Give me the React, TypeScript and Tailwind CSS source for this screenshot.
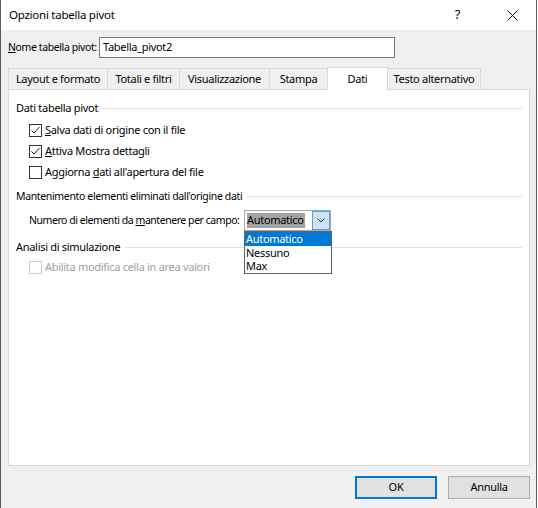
import type { ReactNode } from 'react';

const tabs = [
  { label: 'Layout e formato', width: 'w-[100px]' },
  { label: 'Totali e filtri', width: 'w-[73px]' },
  { label: 'Visualizzazione', width: 'w-[91px]' },
  { label: 'Stampa', width: 'w-[59px]' },
  { label: 'Dati', width: 'w-[61px]', active: true },
  { label: 'Testo alternativo', width: 'w-[94px]' },
];

const font = { fontFamily: '"Noto Sans", "Open Sans", sans-serif' };

export default function App() {
  return (
    <div
      className="h-[508px] w-[538px] overflow-hidden whitespace-nowrap bg-white text-[11px] tracking-[-0.3px] text-black"
      style={font}
    >
      <div className="flex h-[508px] w-[537px] flex-col border-x border-[#5c5c5c]">
        <TitleBar />
        <div className="flex flex-1 flex-col bg-[#f0f0f0] pl-[7px] pr-[6px]">
          <div className="mt-[7px] flex h-[21px] items-center">
            <span className="w-[91px] shrink-0 text-[10.5px] tracking-[-0.4px]">
              <u>N</u>ome tabella pivot:
            </span>
            <div className="flex h-[21px] w-[296px] items-center border border-[#7a7a7a] bg-white pl-[3px]">
              Tabella_pivot2
            </div>
          </div>

          <div className="mt-[9px] flex h-[22px] items-end">
            {tabs.map((tab) =>
              tab.active ? (
                <div
                  key={tab.label}
                  className={`relative z-10 -mb-px -mr-px flex h-[23px] ${tab.width} shrink-0 items-center justify-center border border-b-0 border-[#d9d9d9] bg-white`}
                >
                  {tab.label}
                </div>
              ) : (
                <div
                  key={tab.label}
                  className={`-mr-px flex h-[21px] ${tab.width} shrink-0 items-center justify-center border border-b-0 border-[#d9d9d9] bg-[#f0f0f0]`}
                >
                  {tab.label}
                </div>
              ),
            )}
          </div>

          <div className="relative flex h-[377px] w-[522px] flex-col border border-[#d9d9d9] bg-white pl-[7px] pr-[7px] pt-[8px]">
            <GroupHeader>Dati tabella pivot</GroupHeader>
            <div className="mt-[2px] flex flex-col">
              <CheckRow checked>
                <u>S</u>alva dati di origine con il file
              </CheckRow>
              <CheckRow checked>
                <u>A</u>ttiva Mostra dettagli
              </CheckRow>
              <CheckRow>
                Aggiorna <u>d</u>ati all'apertura del file
              </CheckRow>
            </div>

            <div className="mt-[3px]">
              <GroupHeader>
                <span className="text-[10.5px] tracking-[-0.35px]">Mantenimento elementi eliminati dall'origine dati</span>
              </GroupHeader>
            </div>
            <div className="mt-[4px] flex h-[21px] items-center pl-[13px]">
              <span className="w-[215px] shrink-0 text-[10.5px] tracking-[-0.45px]">
                Numero di elementi da <u>m</u>antenere per campo:
              </span>
              <ComboBox />
            </div>

            <div className="mt-[6px]">
              <GroupHeader>Analisi di simulazione</GroupHeader>
            </div>
            <CheckRow disabled>Abilita modifica cella in area valori</CheckRow>
          </div>

          <div className="mt-[10px] flex justify-end gap-[11px]">
            <button className="h-[23px] w-[82px] border border-[#0078d7] bg-[#e1e1e1] shadow-[inset_0_0_0_1px_#0078d7]">
              OK
            </button>
            <button className="h-[23px] w-[82px] border border-[#adadad] bg-[#e1e1e1]">Annulla</button>
          </div>
        </div>
      </div>
    </div>
  );
}

function TitleBar() {
  return (
    <div className="flex h-[30px] shrink-0 items-center bg-white">
      <span className="pl-[8px] text-[11.5px] tracking-[-0.25px]">Opzioni tabella pivot</span>
      <span className="ml-auto mr-[47px] text-[13px]">?</span>
      <svg className="mr-[18px]" width="11" height="11" viewBox="0 0 11 11" aria-label="Chiudi">
        <path d="M0.5 0.5L10.5 10.5M10.5 0.5L0.5 10.5" stroke="#111" strokeWidth="1" />
      </svg>
    </div>
  );
}

function GroupHeader({ children }: { children: ReactNode }) {
  return (
    <div className="flex h-[20px] items-center gap-[5px]">
      <span className="shrink-0">{children}</span>
      <div className="h-px flex-1 bg-[#e3e3e3]" />
    </div>
  );
}

function CheckRow({ checked, disabled, children }: { checked?: boolean; disabled?: boolean; children: ReactNode }) {
  return (
    <div className={`flex h-[21px] items-center pl-[13px] ${disabled ? 'text-[#a0a0a0]' : ''}`}>
      <div
        className={`mr-[3px] flex h-[13px] w-[13px] shrink-0 items-center justify-center border bg-white ${
          disabled ? 'border-[#cccccc]' : 'border-[#333333]'
        }`}
      >
        {checked && (
          <svg width="11" height="11" viewBox="0 0 11 11">
            <path d="M1.5 5.5L4 8L9.5 2" fill="none" stroke="#222" strokeWidth="1" />
          </svg>
        )}
      </div>
      <span>{children}</span>
    </div>
  );
}

function ComboBox() {
  return (
    <div className="relative flex h-[21px] w-[87px] shrink-0 items-center border border-[#a8a8a8] bg-white">
      <span className="ml-[2px] flex h-[15px] items-center bg-[#a3a3a3] pr-[1px]">Automatico</span>
      <div className="ml-auto flex h-[19px] w-[18px] items-center justify-center border border-[#569de5] bg-[#cce4f7]">
        <svg width="8" height="5" viewBox="0 0 8 5">
          <path d="M0.5 0.5L4 4L7.5 0.5" fill="none" stroke="#333" strokeWidth="1" />
        </svg>
      </div>
      <div className="absolute left-[-1px] top-[20px] z-20 flex w-[88px] flex-col border border-[#646464] bg-white">
        <div className="flex h-[14px] items-center bg-[#0078d7] pl-[1px] text-white">Automatico</div>
        <div className="flex h-[14px] items-center pl-[1px]">Nessuno</div>
        <div className="flex h-[13px] items-center pl-[1px]">Max</div>
      </div>
    </div>
  );
}
